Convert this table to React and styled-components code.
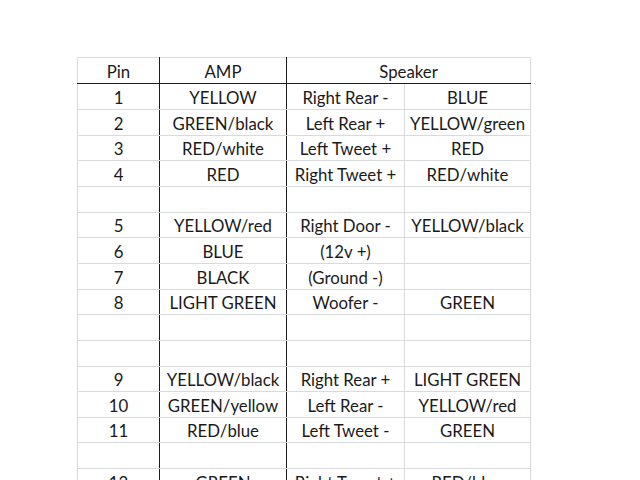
import React from 'react';
import styled, { createGlobalStyle } from 'styled-components';

const GlobalStyle = createGlobalStyle`
  body {
    margin: 0;
    background: #ffffff;
    font-family: Lato, "Open Sans", sans-serif;
  }
`;

const rows = [
  ['1', 'YELLOW', 'Right Rear -', 'BLUE'],
  ['2', 'GREEN/black', 'Left Rear +', 'YELLOW/green'],
  ['3', 'RED/white', 'Left Tweet +', 'RED'],
  ['4', 'RED', 'Right Tweet +', 'RED/white'],
  ['', '', '', ''],
  ['5', 'YELLOW/red', 'Right Door -', 'YELLOW/black'],
  ['6', 'BLUE', '(12v +)', ''],
  ['7', 'BLACK', '(Ground -)', ''],
  ['8', 'LIGHT GREEN', 'Woofer -', 'GREEN'],
  ['', '', '', ''],
  ['', '', '', ''],
  ['9', 'YELLOW/black', 'Right Rear +', 'LIGHT GREEN'],
  ['10', 'GREEN/yellow', 'Left Rear -', 'YELLOW/red'],
  ['11', 'RED/blue', 'Left Tweet -', 'GREEN'],
  ['', '', '', ''],
  ['12', 'GREEN', 'Right Tweet +', 'RED/blue'],
];

const heights = [26, 26, 25, 26, 26, 25, 26, 26, 25, 26, 26, 25, 26, 25, 26, 26];

const Sheet = styled.div`
  padding: 57px 0 0 77px;
  height: 480px;
  overflow: hidden;
  box-sizing: border-box;
`;

const Table = styled.table`
  border-collapse: collapse;
  table-layout: fixed;
  width: 454px;
`;

const Row = styled.tr`
  height: ${(p) => p.$h}px;
`;

const Cell = styled.td`
  border: 1px solid #d8dadd;
  border-right-color: ${(p) => (p.$dark ? '#1c1c1c' : '#d8dadd')};
  padding: 0 1px 1px;
  text-align: center;
  vertical-align: bottom;
  font-size: 16.8px;
  line-height: 21px;
  color: #1a1a1a;
  white-space: nowrap;
  overflow: hidden;
`;

const Head = styled(Cell).attrs({ as: 'th' })`
  font-weight: normal;
  border-bottom-color: #1c1c1c;
`;

export default function App() {
  return (
    <Sheet>
      <GlobalStyle />
      <Table>
        <colgroup>
          <col style={{ width: 82 }} />
          <col style={{ width: 127 }} />
          <col style={{ width: 118 }} />
          <col style={{ width: 126 }} />
        </colgroup>
        <thead>
          <Row $h={26}>
            <Head $dark>Pin</Head>
            <Head $dark>AMP</Head>
            <Head colSpan={2}>Speaker</Head>
          </Row>
        </thead>
        <tbody>
          {rows.map((r, i) => (
            <Row key={i} $h={heights[i]}>
              <Cell $dark>{r[0]}</Cell>
              <Cell $dark>{r[1]}</Cell>
              <Cell>{r[2]}</Cell>
              <Cell>{r[3]}</Cell>
            </Row>
          ))}
        </tbody>
      </Table>
    </Sheet>
  );
}
